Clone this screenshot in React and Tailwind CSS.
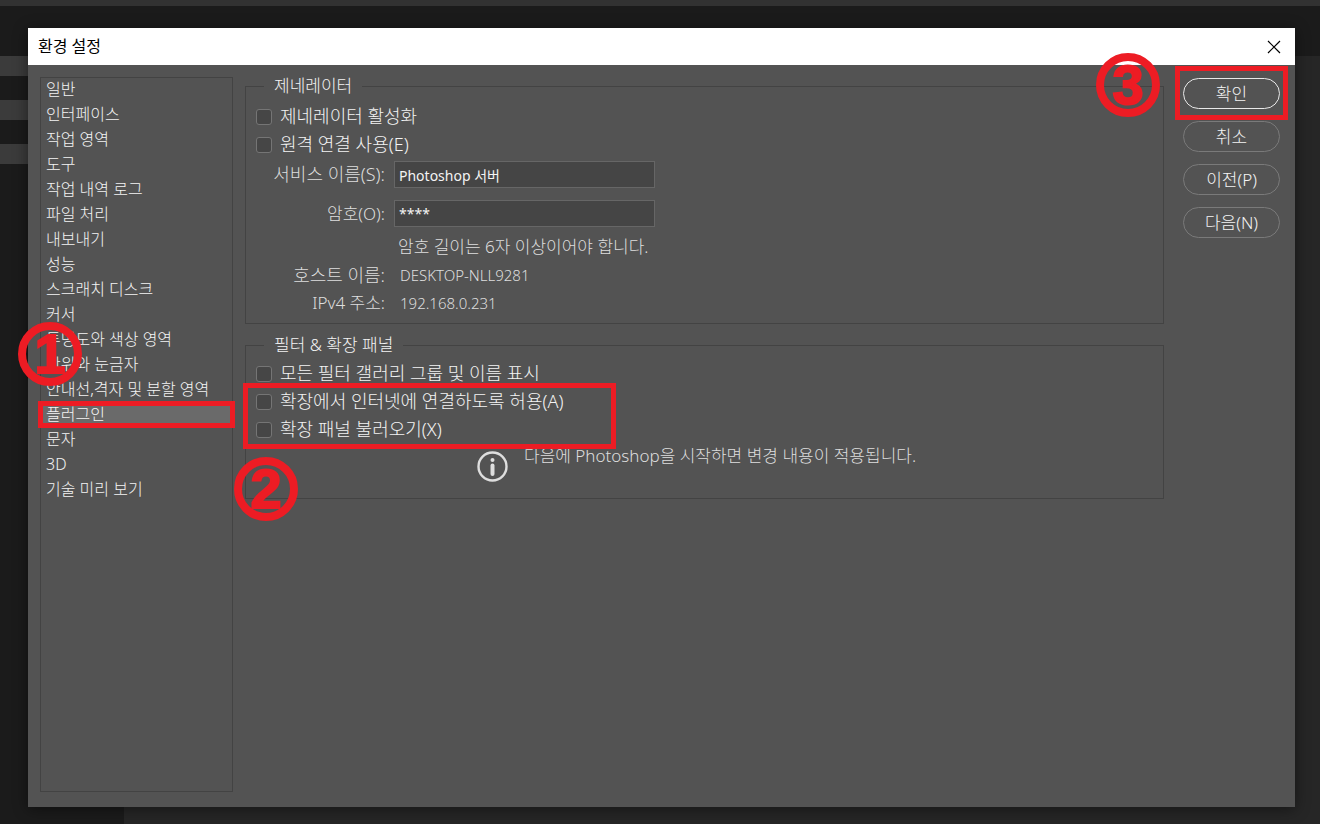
import React, { useState } from 'react';
import { clsx } from 'clsx';

const CATEGORIES = [
  '일반',
  '인터페이스',
  '작업 영역',
  '도구',
  '작업 내역 로그',
  '파일 처리',
  '내보내기',
  '성능',
  '스크래치 디스크',
  '커서',
  '투명도와 색상 영역',
  '단위와 눈금자',
  '안내선,격자 및 분할 영역',
  '플러그인',
  '문자',
  '3D',
  '기술 미리 보기',
];

const Step = ({ number, className }) => (
  <span
    className={clsx(
      "pointer-events-none absolute z-10 flex size-16 items-center justify-center rounded-full border-8 border-[#ed1c24] font-['Liberation_Sans',sans-serif] text-[56px] leading-none font-bold text-[#ed1c24] [-webkit-text-stroke:2px_#ed1c24]",
      className
    )}
  >
    {number}
  </span>
);

const Highlight = ({ className }) => (
  <span className={clsx('pointer-events-none absolute border-5 border-[#ed1c24]', className)} />
);

const CheckRow = ({ id, label }) => (
  <div className="flex h-7 items-center gap-2 pl-2.5">
    <input
      id={id}
      type="checkbox"
      className="mt-0.5 size-4 shrink-0 appearance-none rounded-[3px] border border-[#757575] bg-[#464646] checked:bg-[#1473e6]"
    />
    <label htmlFor={id} className="text-[18px] text-[#f4f4f4]">{label}</label>
  </div>
);

const Group = ({ title, children }) => (
  <fieldset className="min-w-0 border border-[#434343]">
    <legend className="ml-[18px] h-7 px-2.5 text-[17px] leading-7 text-[#f4f4f4]">{title}</legend>
    {children}
  </fieldset>
);

const DialogButton = ({ primary, children }) => (
  <button
    type="button"
    className={clsx(
      'flex h-[31px] w-full items-center justify-center rounded-full border text-[17px] text-[#f4f4f4]',
      primary ? 'border-[#e8e8e8]' : 'border-[#7a7a7a]'
    )}
  >
    {children}
  </button>
);

/* Editor window that shows around the dialog */
const Backdrop = () => (
  <div className="absolute inset-0 flex flex-col bg-[#1b1b1b]">
    <div className="h-1.5 bg-[#323232]" />
    <div className="h-[50px]" />
    <div className="flex flex-1">
      <div className="flex w-31 flex-col gap-6">
        <div className="h-5 bg-[#3b3b3b]" />
        <div className="h-5 bg-[#3b3b3b]" />
        <div className="h-5 bg-[#3b3b3b]" />
      </div>
      <div className="flex-1 bg-[#262626]" />
    </div>
  </div>
);

export default function App() {
  const [selected, setSelected] = useState('플러그인');

  return (
    <div className="relative flex min-h-screen flex-col pt-7 pr-[25px] pb-[17px] pl-7 font-['Noto_Sans','Noto_Sans_CJK_KR',sans-serif] font-light">
      <Backdrop />

      <section className="relative flex flex-1 flex-col bg-[#535353] shadow-[0_2px_14px_rgba(0,0,0,0.45)]">
        <header className="flex h-[37px] items-center justify-between bg-white pr-3.5 pl-2.5">
          <h1 className="pb-0.5 text-base font-normal text-black">환경 설정</h1>
          <button type="button" aria-label="닫기" className="text-black">
            <svg width="14" height="14" viewBox="0 0 14 14" stroke="currentColor" strokeWidth="1.2">
              <path d="M1 1l12 12M13 1L1 13" />
            </svg>
          </button>
        </header>

        <div className="flex flex-1">
          <nav className="relative mt-3 mb-[15px] ml-3 w-[193px] shrink-0 inset-ring inset-ring-[#434343]">
            <ul>
              {CATEGORIES.map((name) => (
                <li key={name} className="relative mx-px h-[25px]">
                  <button
                    type="button"
                    onClick={() => setSelected(name)}
                    className={clsx(
                      'flex h-full w-full items-center pb-0.5 pl-[5px] text-base whitespace-nowrap text-[#f4f4f4]',
                      selected === name && 'bg-[#6a6a6a]'
                    )}
                  >
                    {name}
                  </button>
                  {name === '플러그인' && <Highlight className="-inset-x-[3px] -inset-y-px" />}
                </li>
              ))}
            </ul>
            <Step number={1} className="top-[245px] -left-[22px]" />
          </nav>

          <main className="ml-3 flex min-w-0 flex-1 flex-col gap-[7px] pt-[7px]">
            <div className="relative">
              <Group title="제네레이터">
                <div className="flex flex-col pt-0.5 pb-1.5">
                  <CheckRow id="generator" label="제네레이터 활성화" />
                  <CheckRow id="remote" label="원격 연결 사용(E)" />
                  <div className="mt-[3px] grid grid-cols-[139px_261px] items-center gap-x-[9px] text-[#dedede]">
                    <label htmlFor="service" className="text-right text-[18px] leading-[27px]">서비스 이름(S):</label>
                    <input
                      id="service"
                      type="text"
                      defaultValue="Photoshop 서버"
                      className="h-[27px] border border-[#666] bg-[#454545] px-1 text-sm font-normal text-[#f4f4f4]"
                    />
                    <label htmlFor="password" className="mt-3 text-right text-[17px] leading-[27px]">암호(O):</label>
                    <input
                      id="password"
                      type="text"
                      defaultValue="****"
                      className="mt-3 h-[27px] border border-[#666] bg-[#454545] px-1 text-sm font-normal text-[#f4f4f4]"
                    />
                    <p className="col-start-2 mt-1.5 pl-1 text-[17px] leading-7 whitespace-nowrap">암호 길이는 6자 이상이어야 합니다.</p>
                    <span className="text-right text-[18px] leading-7">호스트 이름:</span>
                    <span className="pl-1.5 text-[15px] leading-7">DESKTOP-NLL9281</span>
                    <span className="text-right text-[17px] leading-7">IPv4 주소:</span>
                    <span className="pl-1.5 text-[15px] leading-7">192.168.0.231</span>
                  </div>
                </div>
              </Group>
              <Step number={3} className="-top-[19px] right-1" />
            </div>

            <div className="relative">
              <Group title="필터 & 확장 패널">
                <CheckRow id="gallery" label="모든 필터 갤러리 그룹 및 이름 표시" />
                <div className="relative">
                  <CheckRow id="internet" label="확장에서 인터넷에 연결하도록 허용(A)" />
                  <CheckRow id="panels" label="확장 패널 불러오기(X)" />
                  <Highlight className="-top-1 -bottom-1.5 -left-[3px] w-[373px]" />
                </div>
                <div className="flex gap-4 pb-4 pl-[231px] text-[#dedede]">
                  <svg className="mt-2 shrink-0" width="31" height="31" viewBox="0 0 31 31" fill="none">
                    <circle cx="15.5" cy="15.5" r="14" stroke="#dedede" strokeWidth="2.4" />
                    <circle cx="15.5" cy="9" r="2" fill="#dedede" />
                    <path d="M15.5 14.5v8.5" stroke="#dedede" strokeWidth="4" strokeLinecap="round" />
                  </svg>
                  <p className="text-[17px] leading-[26px] whitespace-nowrap">다음에 Photoshop을 시작하면 변경 내용이 적용됩니다.</p>
                </div>
              </Group>
              <Step number={2} className="top-[126px] -left-[11px]" />
            </div>
          </main>

          <aside className="relative mr-[15px] ml-[19px] flex w-[97px] shrink-0 flex-col gap-3 pt-[13px]">
            <DialogButton primary>확인</DialogButton>
            <DialogButton>취소</DialogButton>
            <DialogButton>이전(P)</DialogButton>
            <DialogButton>다음(N)</DialogButton>
            <Highlight className="-inset-x-2 top-px h-[54px]" />
          </aside>
        </div>
      </section>
    </div>
  );
}
